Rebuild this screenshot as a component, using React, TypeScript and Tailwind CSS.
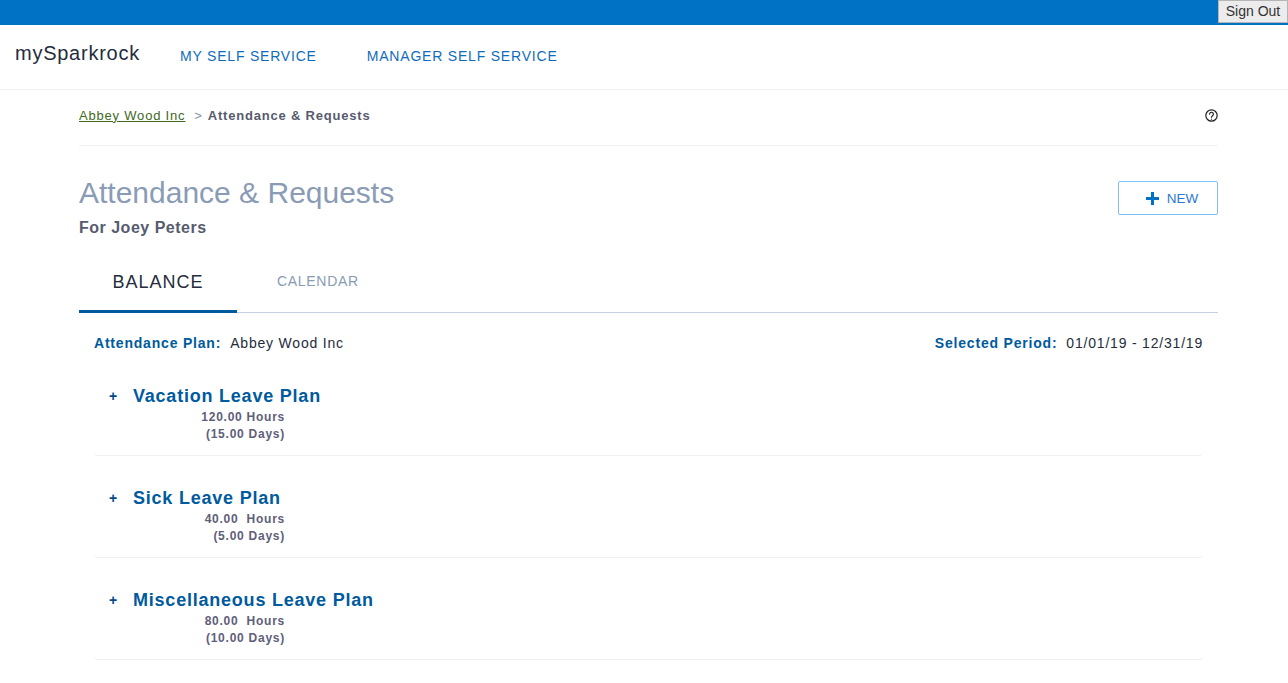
import React from "react";

const plans = [
  { name: "Vacation Leave Plan", hours: "120.00 Hours", days: "(15.00 Days)" },
  { name: "Sick Leave Plan", hours: "40.00\u00a0 Hours", days: "(5.00 Days)" },
  { name: "Miscellaneous Leave Plan", hours: "80.00\u00a0 Hours", days: "(10.00 Days)" },
];

const PlanRow = ({ name, hours, days }: { name: string; hours: string; days: string }) => {
  return (
    <div className="h-[102px] pt-[8px]">
      <div className="h-[75px] rounded-b-[4px] border-b border-[#f0f0f0] px-[15px]">
        <div className="flex h-[30px] items-center">
          <span className="w-[24px] text-[14px] font-bold text-[#004a8c]">+</span>
          <span className="text-[18px] font-bold tracking-[0.78px] text-[#005a9e]">{name}</span>
        </div>
        <div className="-mt-[2px] w-[176px] text-right text-[12px] leading-[17px] font-bold tracking-[0.75px] text-[#605e7a]">
          <div>{hours}</div>
          <div>{days}</div>
        </div>
      </div>
    </div>
  );
};

const App = () => {
  return (
    <div className="min-h-[683px] bg-white font-['Liberation_Sans',Arial,sans-serif]">
      <div className="flex h-[25px] justify-end bg-[#0072c6]">
        <button className="h-[23px] w-[70px] border border-[#b5b5b5] bg-[#ececec] pb-[2px] text-[14px] text-[#333333]">
          Sign Out
        </button>
      </div>

      <div className="flex h-[65px] items-center border-b border-[#f2f2f2] pb-[4px]">
        <div className="mb-[4px] ml-[15px] w-[165px] text-[20px] tracking-[0.75px] text-[#252c3c]">mySparkrock</div>
        <a className="mt-[3px] text-[14px] tracking-[0.8px] text-[#0f6cbd]">MY SELF SERVICE</a>
        <a className="mt-[3px] ml-[50px] text-[14px] tracking-[0.8px] text-[#0f6cbd]">MANAGER SELF SERVICE</a>
      </div>

      <div className="mx-[79px] w-[1139px]">
        <div className="flex h-[56px] items-center justify-between border-b border-[#f2f2f2] pb-[4px]">
          <div className="text-[13px] tracking-[0.8px]">
            <a className="text-[#40691e] underline">Abbey Wood Inc</a>
            <span className="mr-[5px] ml-[9px] text-[#8a8fa3]">&gt;</span>
            <span className="font-bold text-[#565b6e]">Attendance &amp; Requests</span>
          </div>
          <svg width="13" height="13" viewBox="0 0 24 24" fill="none" stroke="#222222" strokeWidth="2.2" strokeLinecap="round">
            <circle cx="12" cy="12" r="10.5" />
            <path d="M8.5 9.5a3.5 3.5 0 1 1 5.5 2.9c-1.2.8-2 1.4-2 2.8" />
            <path d="M12 18.5v.2" />
          </svg>
        </div>

        <div className="flex h-[112px] items-start justify-between">
          <div className="pt-[29px]">
            <h1 className="text-[30px] leading-[36px] text-[#8a9bb5]">Attendance &amp; Requests</h1>
            <div className="mt-[7px] text-[16px] leading-[20px] font-bold tracking-[0.5px] text-[#565b6e]">For Joey Peters</div>
          </div>
          <button className="mt-[35px] flex h-[34px] w-[100px] items-center justify-center gap-[8px] rounded-[2px] border border-[#7cc0f5] pl-[8px]">
            <svg width="13" height="13" viewBox="0 0 13 13" fill="#0072c6">
              <rect x="5" y="0" width="3" height="13" />
              <rect x="0" y="5" width="13" height="3" />
            </svg>
            <span className="mt-[2px] text-[13.5px] text-[#2a78d6]">NEW</span>
          </button>
        </div>

        <div className="flex h-[55px] border-b border-[#c5d0e0]">
          <div className="flex h-[55px] w-[158px] items-center justify-center border-b-[3px] border-[#005a9e] pb-[4px] text-[18px] tracking-[1px] text-[#252c3c]">
            BALANCE
          </div>
          <div className="ml-[40px] flex h-[54px] items-center pb-[7px] text-[14px] tracking-[0.7px] text-[#8a9bb5]">
            CALENDAR
          </div>
        </div>

        <div className="flex h-[60px] items-center justify-between px-[15px] text-[14px] tracking-[0.8px]">
          <div>
            <span className="font-bold text-[#005a9e]">Attendance Plan:</span>
            <span className="ml-[9px] text-[#252c3c]">Abbey Wood Inc</span>
          </div>
          <div>
            <span className="font-bold text-[#005a9e]">Selected Period:</span>
            <span className="ml-[9px] text-[#252c3c]">01/01/19 - 12/31/19</span>
          </div>
        </div>

        <div className="px-[15px]">
          {plans.map((p) => (
            <PlanRow key={p.name} name={p.name} hours={p.hours} days={p.days} />
          ))}
        </div>
      </div>
    </div>
  );
};

export default App;
